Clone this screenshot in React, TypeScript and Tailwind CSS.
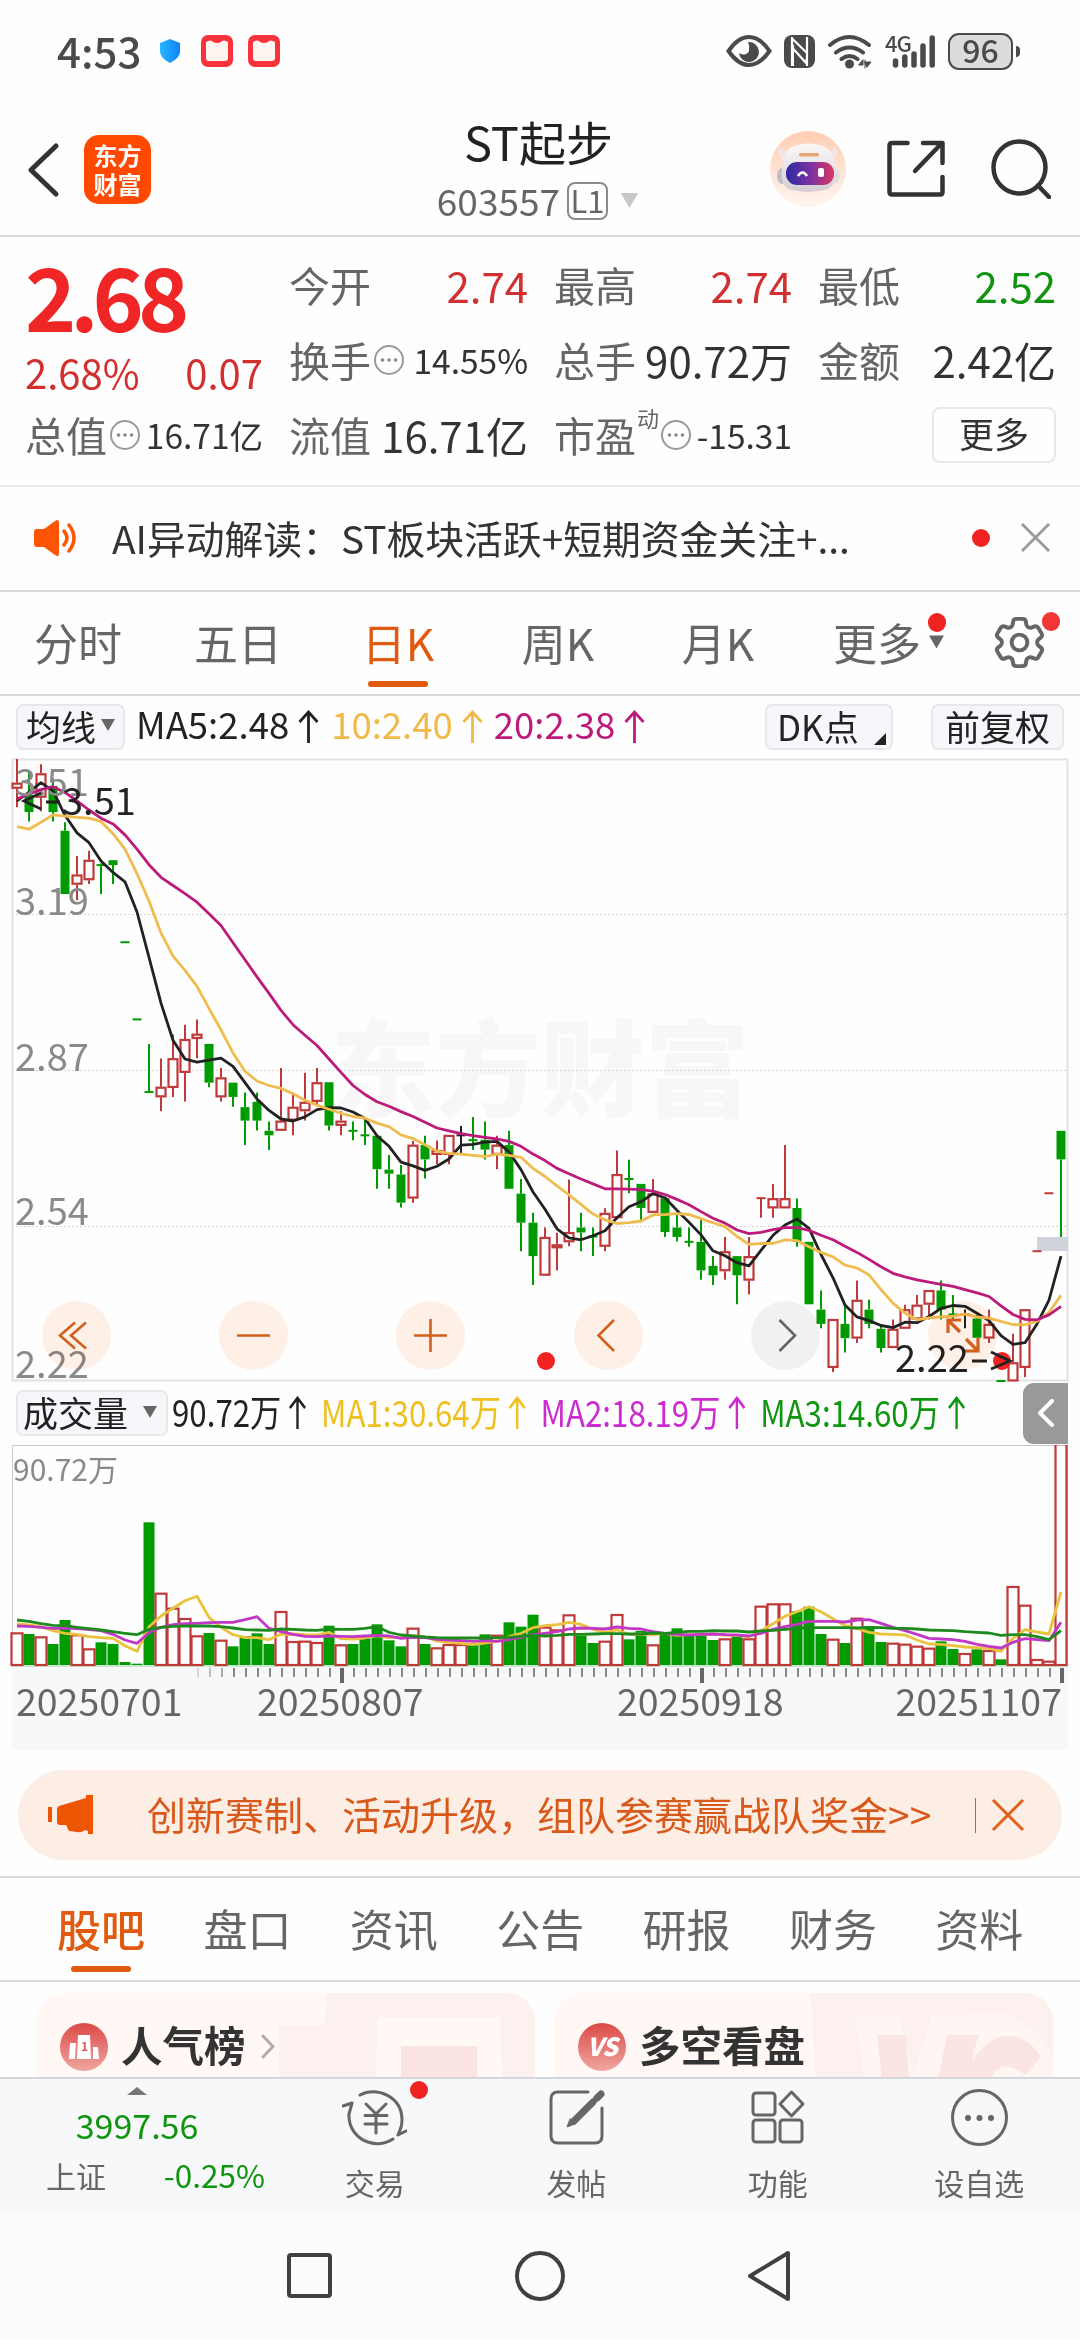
import React, { useState } from "react";
import { HiOutlineCog6Tooth } from "react-icons/hi2";

type Kind = "r" | "g" | "k";
// [color, high, body top, body bottom, low] in chart units (0.01 = 11.8)
type Candle = [Kind, number, number, number, number];

const candles: Candle[] = [
  ["r", 22, 80, 95, 140], ["g", 55, 110, 152, 175], ["r", 35, 57, 117, 150], ["g", 70, 88, 152, 175],
  ["g", 177, 198, 353, 353], ["r", 260, 305, 330, 368], ["r", 247, 269, 319, 328], ["g", 278, 282, 282, 353],
  ["g", 270, 270, 282, 328], ["g", 471, 471, 471, 471], ["g", 660, 660, 660, 660], ["g", 720, 838, 838, 838],
  ["r", 756, 825, 851, 885], ["r", 697, 755, 828, 850], ["r", 673, 708, 791, 861], ["r", 660, 695, 708, 755],
  ["g", 720, 720, 815, 826], ["r", 779, 802, 851, 861], ["g", 815, 815, 850, 874], ["g", 839, 875, 908, 968],
  ["g", 839, 862, 908, 932], ["g", 910, 933, 944, 980], ["r", 779, 908, 933, 933], ["r", 839, 874, 908, 944],
  ["r", 791, 862, 885, 908], ["r", 779, 814, 862, 870], ["g", 814, 814, 920, 932], ["r", 885, 908, 921, 944],
  ["g", 910, 933, 933, 956], ["g", 900, 944, 944, 968], ["g", 945, 945, 1027, 1075], ["g", 992, 1028, 1038, 1075],
  ["g", 1017, 1040, 1109, 1121], ["r", 958, 967, 1099, 1109], ["g", 945, 968, 1003, 1050], ["r", 957, 980, 992, 1015],
  ["r", 943, 943, 992, 1015], ["k", 921, 944, 944, 990], ["g", 899, 956, 956, 980], ["g", 910, 955, 979, 1003],
  ["r", 945, 967, 992, 1027], ["g", 933, 968, 1075, 1075], ["g", 1051, 1087, 1158, 1228], ["g", 1134, 1158, 1240, 1311],
  ["r", 1170, 1193, 1288, 1288], ["r", 1183, 1211, 1217, 1275], ["r", 1052, 1181, 1206, 1216], ["g", 1134, 1170, 1182, 1228],
  ["g", 1170, 1192, 1192, 1240], ["r", 1123, 1134, 1217, 1228], ["r", 981, 1039, 1147, 1147], ["g", 1004, 1051, 1051, 1086],
  ["g", 1063, 1063, 1122, 1157], ["r", 1051, 1086, 1134, 1134], ["g", 1098, 1098, 1181, 1193], ["g", 1134, 1170, 1193, 1204],
  ["g", 1170, 1205, 1205, 1217], ["g", 1147, 1205, 1275, 1298], ["g", 1240, 1264, 1287, 1311], ["r", 1193, 1228, 1277, 1298],
  ["g", 1240, 1240, 1287, 1358], ["r", 1193, 1240, 1300, 1334], ["r", 1098, 1098, 1098, 1146], ["r", 1063, 1098, 1123, 1146],
  ["r", 968, 1098, 1123, 1123], ["g", 1099, 1122, 1205, 1217], ["g", 1205, 1205, 1358, 1358], ["g", 1324, 1371, 1406, 1417],
  ["r", 1394, 1394, 1514, 1524], ["g", 1360, 1406, 1441, 1476], ["r", 1300, 1347, 1442, 1453], ["g", 1347, 1371, 1406, 1417],
  ["g", 1410, 1418, 1465, 1476], ["r", 1395, 1418, 1465, 1465], ["r", 1359, 1370, 1418, 1418], ["r", 1335, 1359, 1395, 1395],
  ["r", 1323, 1323, 1359, 1395], ["g", 1300, 1324, 1371, 1395], ["g", 1335, 1383, 1383, 1393], ["k", 1371, 1383, 1383, 1417],
  ["g", 1383, 1393, 1440, 1440], ["r", 1371, 1406, 1442, 1453], ["g", 1546, 1546, 1546, 1546], ["r", 1430, 1500, 1547, 1547],
  ["r", 1370, 1370, 1514, 1536], ["r", 1228, 1228, 1228, 1228], ["r", 1086, 1086, 1086, 1086], ["g", 933, 933, 1003, 1193],
];

const ma5 = [125, 103, 80, 100, 160, 203, 227, 272, 300, 323, 397, 508, 620, 711, 757, 765, 760, 755, 775, 815, 855, 883, 904, 909, 899, 881, 876, 877, 887, 903, 945, 971, 1010, 1019, 1030, 1020, 1002, 968, 966, 961, 959, 985, 1028, 1083, 1125, 1173, 1195, 1200, 1190, 1178, 1146, 1119, 1107, 1087, 1097, 1128, 1157, 1188, 1227, 1239, 1256, 1264, 1226, 1189, 1164, 1149, 1172, 1236, 1293, 1360, 1389, 1398, 1410, 1415, 1402, 1403, 1388, 1368, 1361, 1363, 1380, 1398, 1435, 1456, 1452, 1406, 1348, 1240];
const ma10 = [188, 194, 177, 159, 162, 165, 167, 175, 205, 243, 303, 370, 448, 505, 540, 579, 633, 686, 742, 787, 811, 822, 829, 842, 858, 870, 880, 890, 898, 902, 914, 923, 943, 952, 967, 983, 988, 990, 993, 996, 990, 993, 998, 1025, 1045, 1068, 1090, 1113, 1137, 1151, 1160, 1158, 1154, 1139, 1138, 1136, 1138, 1148, 1158, 1168, 1192, 1211, 1209, 1209, 1200, 1202, 1217, 1231, 1242, 1262, 1269, 1286, 1322, 1355, 1380, 1396, 1391, 1389, 1387, 1382, 1389, 1392, 1400, 1408, 1408, 1400, 1378, 1336];
const ma20 = [120, 108, 97, 90, 104, 125, 147, 167, 181, 208, 243, 281, 312, 332, 352, 373, 401, 430, 472, 514, 556, 596, 638, 673, 699, 724, 757, 790, 822, 844, 862, 873, 886, 898, 912, 926, 933, 940, 945, 949, 953, 959, 971, 990, 1006, 1025, 1038, 1051, 1063, 1075, 1075, 1076, 1077, 1081, 1089, 1101, 1114, 1131, 1147, 1159, 1176, 1185, 1182, 1175, 1170, 1170, 1177, 1189, 1200, 1216, 1231, 1248, 1266, 1282, 1291, 1298, 1304, 1309, 1314, 1322, 1330, 1339, 1362, 1383, 1395, 1396, 1384, 1363];

const volumes = [757, 762, 769, 792, 720, 763, 805, 787, 792, 846, 851, 427, 638, 683, 714, 766, 759, 779, 799, 768, 760, 792, 693, 783, 782, 786, 737, 793, 792, 775, 733, 781, 799, 743, 792, 802, 792, 792, 790, 763, 764, 727, 740, 704, 740, 748, 703, 767, 789, 782, 702, 778, 753, 793, 760, 745, 762, 762, 780, 775, 770, 775, 677, 670, 670, 694, 680, 762, 776, 789, 713, 738, 786, 788, 791, 797, 803, 784, 807, 819, 808, 810, 838, 618, 674, 837, 842, 190];
const volMa1 = [732, 735, 740, 752, 760, 763, 770, 773, 775, 797, 814, 740, 708, 685, 662, 649, 712, 742, 764, 773, 773, 779, 763, 762, 764, 765, 757, 776, 777, 774, 767, 773, 773, 768, 771, 783, 787, 790, 794, 789, 783, 770, 760, 743, 737, 734, 727, 733, 748, 757, 750, 763, 762, 764, 760, 766, 764, 763, 762, 765, 767, 770, 752, 731, 709, 695, 680, 695, 716, 737, 745, 757, 762, 763, 765, 780, 792, 793, 797, 801, 803, 805, 814, 775, 749, 756, 762, 636];
const volMa2 = [738, 739, 742, 745, 744, 746, 749, 752, 763, 780, 790, 758, 742, 734, 731, 730, 728, 727, 727, 719, 710, 745, 755, 763, 769, 770, 768, 769, 770, 768, 766, 768, 775, 772, 773, 778, 780, 782, 784, 782, 784, 779, 772, 764, 760, 755, 747, 744, 745, 747, 741, 745, 747, 755, 760, 763, 765, 763, 762, 764, 765, 768, 760, 748, 740, 733, 724, 724, 724, 726, 720, 719, 730, 742, 752, 763, 775, 777, 779, 784, 793, 799, 804, 787, 776, 779, 782, 727];
const volMa3 = [720, 724, 731, 736, 737, 742, 746, 750, 755, 760, 764, 748, 742, 739, 738, 738, 738, 740, 744, 749, 750, 751, 747, 748, 750, 751, 747, 748, 748, 745, 740, 757, 765, 768, 771, 773, 774, 774, 774, 774, 773, 772, 769, 766, 768, 766, 763, 763, 762, 761, 761, 762, 762, 759, 760, 757, 754, 754, 752, 753, 753, 756, 753, 751, 748, 745, 743, 743, 743, 743, 744, 742, 743, 745, 745, 747, 750, 751, 752, 755, 757, 759, 766, 764, 764, 770, 779, 752];

const RED = "#be3a3a";
const GREEN = "#009b00";
const colors: Record<Kind, string> = { r: RED, g: GREEN, k: "#222" };

const cx = (i: number) => 17 + i * 12;
const priceY = (v: number) => v / 2.45 - 9;
const volY = (v: number) => v / 3 - 65;
const line = (data: number[], y: (v: number) => number) =>
  data.map((v, i) => `${cx(i)},${y(v).toFixed(1)}`).join(" ");

const UpArrow = ({ className = "" }: { className?: string }) => (
  <svg className={className} width="21" height="34" viewBox="0 0 21 34" fill="none" stroke="currentColor" strokeWidth="2.8">
    <path d="M10.5 33V3M1.5 12l9-10 9 10" />
  </svg>
);

const Down = ({ className = "" }: { className?: string }) => (
  <svg className={className} width="14" height="12" viewBox="0 0 14 12" fill="currentColor">
    <path d="M0 0h14L7 12z" />
  </svg>
);

const MoreDots = () => (
  <svg className="ml-[2px] shrink-0" width="32" height="32" viewBox="0 0 32 32">
    <circle cx="16" cy="16" r="14" fill="none" stroke="#9a9a9a" strokeWidth="2" />
    <g fill="#888">
      <circle cx="9.5" cy="16" r="1.8" />
      <circle cx="16" cy="16" r="1.8" />
      <circle cx="22.5" cy="16" r="1.8" />
    </g>
  </svg>
);

function StatusBar() {
  return (
    <div className="flex h-[102px] items-center pl-[57px] pr-[60px] text-[#4a4a4a]">
      <span className="-mt-[2px] text-[42px] font-medium leading-none">4:53</span>
      <svg className="ml-[18px]" width="22" height="24" viewBox="0 0 22 24">
        <defs>
          <linearGradient id="shield" x2="1">
            <stop offset="0" stopColor="#27b7ff" />
            <stop offset="1" stopColor="#0f83f7" />
          </linearGradient>
        </defs>
        <path d="M11 0l10 4v8c0 5-4 9-10 12C5 21 1 17 1 12V4z" fill="url(#shield)" />
      </svg>
      {[0, 1].map((n) => (
        <svg key={n} className={n ? "ml-[15px]" : "ml-[20px]"} width="32" height="32" viewBox="0 0 32 32">
          <rect width="32" height="32" rx="7" fill="#f8333c" />
          <path d="M5 7q5-3 7 0 4 2 8 0 2-3 7 0v16q0 3-3 3H8q-3 0-3-3z" fill="#fff5f0" />
        </svg>
      ))}
      <div className="flex-1" />
      <svg width="46" height="34" viewBox="0 0 46 34">
        <path d="M2.5 17C10 6 17 3 23 3s13 3 20.500 14C36 28 29 31 23 31S10 28 2.500 17z" fill="none" stroke="currentColor" strokeWidth="4" />
        <path d="M22 8a10 10 0 11-9 11q7 4 10-2 1-5-1-9z" fill="currentColor" />
      </svg>
      <svg className="ml-[12px]" width="31" height="33" viewBox="0 0 31 33">
        <rect width="31" height="33" rx="8" fill="currentColor" />
        <path d="M9 31V7l14 19V2" stroke="#fff" strokeWidth="2" fill="none" />
        <path d="M9.500 3l13.500 14v9L9 7zM9 2h3l11 14-2 10L9 9z" fill="#4a4a4a" />
        <path d="M8 2v29M23 2v29M8.500 4L23 18M8.500 13L23 29" stroke="#fff" strokeWidth="2.200" fill="none" />
      </svg>
      <svg className="ml-[12px]" width="46" height="35" viewBox="0 0 46 35" fill="none" stroke="currentColor" strokeWidth="4" strokeLinecap="round">
        <path d="M3 11q19-16 39 0M9 18.500q13.500-10 27 0M14.500 25q8-6 16 0" />
        <circle cx="22.500" cy="30" r="4.500" fill="currentColor" stroke="none" />
        <path d="M32 31h4v-5zM38 26v8M38 28h6l-4 5z" strokeWidth="1" fill="currentColor" />
      </svg>
      <div className="relative ml-[12px] h-[36px] w-[50px]">
        <span className="absolute -top-[2px] left-0 text-[22px] font-medium leading-none tracking-[-1px]">4G</span>
        <svg width="50" height="36" viewBox="0 0 50 36" stroke="currentColor" strokeWidth="5.500" strokeLinecap="round">
          <path d="M10.500 28v4M19.800 24v8M29 21v11M38 13v19M47.200 5v27" />
        </svg>
      </div>
      <div className="ml-[13px] flex h-[37px] w-[65px] items-center justify-center rounded-[11px] border-[2.5px] border-[#4a4a4a] bg-[#dcdcdc]">
        <span className="relative -top-[2px] text-[32px] font-medium leading-none">96</span>
      </div>
      <div className="ml-[3px] h-[11px] w-[4px] rounded-r bg-[#4a4a4a]" />
    </div>
  );
}

function Robot() {
  return (
    <svg width="76" height="76" viewBox="0 0 76 76">
      <defs>
        <linearGradient id="halo" x2="0" y2="1">
          <stop offset="0" stopColor="#ffcdb2" />
          <stop offset="1" stopColor="#fff6f1" />
        </linearGradient>
        <linearGradient id="visor" x2="1">
          <stop offset="0" stopColor="#2c2a9e" />
          <stop offset=".5" stopColor="#7b30a6" />
          <stop offset="1" stopColor="#d9385f" />
        </linearGradient>
        <linearGradient id="helmet" x2="0" y2="1">
          <stop offset="0" stopColor="#fdf9f8" />
          <stop offset="1" stopColor="#d3ccd3" />
        </linearGradient>
      </defs>
      <circle cx="38" cy="38" r="38" fill="url(#halo)" />
      <path d="M9 14q-3 9 4 15l8-8Q12 21 9 14zM66 14q4 9-3 15l-7-8q8 0 10-7z" fill="#f3e6e2" />
      <ellipse cx="12" cy="45" rx="5" ry="8" fill="#bfbcc6" />
      <ellipse cx="66" cy="45" rx="4" ry="7" fill="#e3dce0" />
      <path d="M20 17q18-9 37 0 8 6 9 21 1 14-8 20-20 6-40 0-8-6-6-20 1-15 8-21z" fill="url(#helmet)" />
      <rect x="29" y="22" width="20" height="3.500" rx="1.700" fill="#e5a873" />
      <rect x="16" y="31" width="48" height="23" rx="11" fill="url(#visor)" />
      <path d="M28 45q4.500-7 9 0" fill="none" stroke="#fff" strokeWidth="2.500" />
      <rect x="48" y="37" width="6" height="9" rx="2" fill="#fff" />
    </svg>
  );
}

function Header() {
  return (
    <div className="flex h-[135px] items-start border-b-2 border-[#dcdcdc] pl-[27px] pr-[29px]">
      <svg className="mt-[41px]" width="32" height="54" viewBox="0 0 32 54" fill="none" stroke="#333" strokeWidth="5" strokeLinecap="round" strokeLinejoin="round">
        <path d="M29 3L4 27l25 24" />
      </svg>
      <div className="ml-[25px] mt-[33px] flex h-[69px] w-[67px] flex-col items-center justify-center rounded-[15px] bg-[#ff4800] pb-[2px] text-[24px] font-bold leading-[29px] text-white">
        <span>东方</span>
        <span>财富</span>
      </div>
      <div className="flex w-[776px] flex-col items-center">
        <div className="mt-[14px] text-[47px] leading-[50px] text-[#222]">ST起步</div>
        <div className="mt-[12px] flex items-center text-[#666]">
          <span className="text-[37px] leading-[44px]">603557</span>
          <span className="ml-[7px] mt-[2px] flex h-[38px] w-[41px] items-center justify-center rounded-[8px] border-2 border-[#8a8a8a] pb-[3px] text-[31px] leading-none">L1</span>
          <Down className="ml-[11px] h-[15px] w-[21px] text-[#c8c8c8]" />
        </div>
      </div>
      <div className="-ml-[156px] mt-[29px] flex items-center">
        <Robot />
        <svg className="ml-[41px]" width="58" height="58" viewBox="0 0 58 58" fill="none" stroke="#333" strokeWidth="4.500" strokeLinecap="round" strokeLinejoin="round">
          <path d="M20.500 3H5Q2.500 3 2.500 5.500V52q0 2.500 2.500 2.500h48.500q2 0 2-2.500V37M36 3h19.500v20M54 4L28 31" />
        </svg>
        <svg className="ml-[46px]" width="60" height="60" viewBox="0 0 60 60" fill="none" stroke="#333" strokeWidth="4.500" strokeLinecap="round">
          <circle cx="28.500" cy="28.500" r="26" />
          <path d="M47 46.500L58 58" />
        </svg>
      </div>
    </div>
  );
}

function Cell({ label, value, color = "text-[#333]", small, dots, sup }: {
  label: string;
  value: string;
  color?: string;
  small?: boolean;
  dots?: boolean;
  sup?: string;
}) {
  return (
    <div className="flex h-[75px] items-center whitespace-nowrap">
      <span className="text-[41px] text-[#666]">{label}</span>
      {sup && <span className="-mr-[1px] ml-[1px] -mt-[36px] text-[22px] text-[#666]">{sup}</span>}
      {dots && <MoreDots />}
      <span className={`ml-auto ${color} ${small ? "text-[33.5px]" : "text-[42px]"}`}>{value}</span>
    </div>
  );
}

function Quote() {
  return (
    <div className="flex h-[250px] gap-[26px] border-b-2 border-[#ececec] pl-[25px] pr-[24px] pt-[10px] leading-none">
      <div className="flex w-[238px] flex-col text-[#d23030]">
        <div className="h-[100px] whitespace-nowrap pt-[4px] text-[87px] font-bold leading-[86px] tracking-[-6px] text-[#f02626]">2.68</div>
        <div className="flex h-[50px] items-center justify-between text-[40px]">
          <span>2.68%</span>
          <span>0.07</span>
        </div>
        <Cell label="总值" value="16.71亿" small dots />
      </div>
      <div className="w-[239px]">
        <Cell label="今开" value="2.74" color="text-[#d23030]" />
        <Cell label="换手" value="14.55%" small dots />
        <Cell label="流值" value="16.71亿" />
      </div>
      <div className="w-[238px]">
        <Cell label="最高" value="2.74" color="text-[#d23030]" />
        <Cell label="总手" value="90.72万" />
        <Cell label="市盈" value="-15.31" small dots sup="动" />
      </div>
      <div className="w-[238px]">
        <Cell label="最低" value="2.52" color="text-[#109510]" />
        <Cell label="金额" value="2.42亿" />
        <div className="flex h-[75px] items-center justify-end">
          <button className="flex h-[56px] w-[124px] items-center justify-center rounded-[8px] border-2 border-[#e8e8e8] pb-[4px] text-[35px] text-[#333]">更多</button>
        </div>
      </div>
    </div>
  );
}

function Notice() {
  return (
    <div className="flex h-[105px] items-center border-b-2 border-[#d9d9d9] pb-[2px] pl-[33px] pr-[29px]">
      <svg width="46" height="38" viewBox="0 0 46 38">
        <path d="M1 13q0-3 3-3h7L22 2q4-3 4 2v30q0 5-4 2l-11-8H4q-3 0-3-3z" fill="#ff5500" />
        <path d="M31 12q6 7 0 14M36 6q10 13 0 26" fill="none" stroke="#ff5500" strokeWidth="3.500" strokeLinecap="round" />
      </svg>
      <span className="ml-[33px] text-[38.8px] leading-none text-[#333]">AI异动解读：ST板块活跃+短期资金关注+...</span>
      <span className="ml-auto h-[18px] w-[18px] rounded-full bg-[#f02222]" />
      <svg className="ml-[30px]" width="31" height="31" viewBox="0 0 31 31" stroke="#999" strokeWidth="2.800">
        <path d="M2 2l27 27M29 2L2 29" />
      </svg>
    </div>
  );
}

function PeriodTabs() {
  const [active, setActive] = useState("日K");
  const tabs = ["分时", "五日", "日K", "周K", "月K"];
  return (
    <div className="flex h-[104px] items-center border-b-2 border-[#d9d9d9] pb-[2px] text-[44px] leading-none text-[#666]">
      <div className="-ml-0.5 flex">
        {tabs.map((t) => (
          <button
            key={t}
            onClick={() => setActive(t)}
            className={`relative w-40 text-center leading-none ${t === active ? "text-[#e05a10]" : ""}`}
          >
            {t}
            {t === active && <span className="absolute -bottom-[23px] left-[50px] h-[6px] w-[60px] rounded-full bg-[#e05a10]" />}
          </button>
        ))}
      </div>
      <button className="relative ml-[35px] flex items-center leading-none">
        更多
        <Down className="ml-[8px] h-[14px] w-[15px]" />
        <span className="absolute -top-[7px] left-[95px] h-[19px] w-[18px] rounded-full bg-[#f02222]" />
      </button>
      <button className="relative ml-[44px]">
        <HiOutlineCog6Tooth className="h-[63px] w-[63px] [&_path]:[stroke-width:1.5]" />
        <span className="absolute top-[1px] left-[54px] h-[19px] w-[18px] rounded-full bg-[#f23535]" />
      </button>
    </div>
  );
}

const chip = "flex h-[46px] items-center rounded-[7px] border-2 border-[#e6e8eb] bg-[#f6f7fa] pb-[3px] text-[35px] leading-none text-[#222]";

function MaRow() {
  return (
    <div className="flex h-[63px] items-center pb-[2px] pl-[16px] pr-[16px] text-[36.5px] leading-none">
      <button className={`${chip} w-[109px] pl-[8px]`}>
        均线
        <Down className="ml-[5px] text-[#666]" />
      </button>
      <span className="-mt-[4px] ml-[11px] text-[#222]">MA5:2.48</span>
      <UpArrow className="ml-[9px] text-[#222]" />
      <span className="-mt-[4px] ml-[12px] text-[#f1b947]">10:2.40</span>
      <UpArrow className="ml-[9px] text-[#f1b947]" />
      <span className="-mt-[4px] ml-[11px] text-[#bd1b7b]">20:2.38</span>
      <UpArrow className="ml-[9px] text-[#bd1b7b]" />
      <button className={`${chip} relative ml-auto w-[128px] pl-[10px]`}>
        DK点
        <svg className="absolute bottom-[3px] right-[5px]" width="12" height="12">
          <path d="M12 0v12H0z" fill="#222" />
        </svg>
      </button>
      <button className={`${chip} ml-[38px] w-[133px] justify-center`}>前复权</button>
    </div>
  );
}

function PriceChart() {
  return (
    <svg className="block overflow-visible" width="1080" height="622" viewBox="0 0 1080 622">
      <text x="540" y="349" fontSize="105" fontWeight="900" fill="#f7f7f7" textAnchor="middle">东方财富</text>
      <path d="M12.500 622V0.500H1067.500V622" fill="none" stroke="#e2e2e2" strokeWidth="2" />
      <path d="M12 621.500H1068" stroke="#e2e2e2" strokeWidth="2" />
      <path d="M12 155.500H1068M12 311.500H1068M12 467.500H1068" stroke="#d6d6d6" strokeDasharray="2 2" />
      <rect x="1037" y="478" width="31" height="14" fill="#d0d4da" />

      {candles.map(([kind, high, top, bottom, low], i) => {
        const x = cx(i);
        const c = colors[kind];
        const doji = top === bottom;
        return (
          <g key={i}>
            {high < top && <path d={`M${x} ${priceY(high)}V${priceY(top)}`} stroke={c} strokeWidth="2" />}
            {low > bottom && <path d={`M${x} ${priceY(bottom)}V${priceY(low)}`} stroke={c} strokeWidth="2" />}
            {doji && <path d={`M${x - 4.5} ${priceY(top)}h9`} stroke={c} strokeWidth="2" />}
            {!doji && kind === "r" && (
              <rect x={x - 4.5} y={priceY(top) + 1} width="9" height={Math.max(priceY(bottom) - priceY(top) - 2, 2)} fill="#fff" stroke={c} strokeWidth="2.200" />
            )}
            {!doji && kind === "g" && (
              <rect x={x - 4.5} y={priceY(top)} width="9" height={priceY(bottom) - priceY(top)} fill={c} />
            )}
          </g>
        );
      })}

      <g fill="none" strokeWidth="2.800" strokeLinejoin="round">
        <polyline points={line(ma5, priceY)} stroke="#222" />
        <polyline points={line(ma10, priceY)} stroke="#f0bc50" />
        <polyline points={line(ma20, priceY)} stroke="#bd1b7b" />
      </g>

      <g fontSize="38" fill="#8a8a8a">
        <text x="15" y="37">3.51</text>
        <text x="15" y="156">3.19</text>
        <text x="15" y="312">2.87</text>
        <text x="15" y="466">2.54</text>
        <text x="15" y="619">2.22</text>
      </g>
      <circle cx="546" cy="602" r="9" fill="#f02222" />
      <circle cx="1002" cy="602" r="9" fill="#f02222" />
      <g fontSize="38" fill="#222">
        <text x="62" y="56">3.51</text>
        <text x="895" y="613">2.22</text>
      </g>
      <g fill="none" stroke="#222" strokeWidth="2.800">
        <path d="M41 34L24 42l17 8M46 43h14" />
        <path d="M972 602h15M991 593l19 9-19 8" />
      </g>
    </svg>
  );
}

const controls = [
  <path d="M33 18L18 31l15 13M44 18L29 31l15 13" />,
  <path d="M18 34.500h33" />,
  <path d="M18 34.500h33M34.500 18v33" />,
  <path d="M40 19L24.500 34.500 40 50" />,
  <path d="M28.500 19L44 34.500 28.500 50" />,
  <path d="M20 32V19h13M20 19l12 12M50 37v13H37M50 50L38 38" />,
];

function ChartControls() {
  return (
    <div className="absolute bottom-[11px] left-[42px] flex gap-[108.2px] mix-blend-multiply">
      {controls.map((icon, i) => (
        <button
          key={i}
          className={`h-[69px] w-[69px] rounded-full ${i === 4 ? "bg-[#f2f2f2]" : "bg-[#fff0e8]"}`}
        >
          <svg width="69" height="69" viewBox={i === 0 ? "0 -3.5 69 69" : "0 0 69 69"} fill="none" stroke={i === 4 ? "#666" : "#d2601c"} strokeWidth={i === 5 ? 3.2 : 2.6}>
            {icon}
          </svg>
        </button>
      ))}
    </div>
  );
}

function VolumeRow() {
  const items = [
    { text: "90.72万", color: "text-[#222]" },
    { text: "MA1:30.64万", color: "text-[#efc01f]" },
    { text: "MA2:18.19万", color: "text-[#cb2bd0]" },
    { text: "MA3:14.60万", color: "text-[#109510]" },
  ];
  return (
    <div className="flex h-[64px] items-center pl-[16px] leading-none">
      <button className={`${chip} w-[152px] shrink-0 pl-[5px]`}>
        成交量
        <Down className="ml-[15px] text-[#666]" />
      </button>
      {/* the legend is condensed so that four values fit on one line */}
      <div className="ml-[4px] flex w-[851px] shrink-0">
        <div className="flex origin-left scale-x-[0.845] items-center whitespace-nowrap text-[37px]">
          {items.map((it) => (
            <span key={it.text} className={`mr-[17px] flex items-center ${it.color}`}>
              <span className="-mt-[4px]">{it.text}</span>
              <UpArrow className="ml-[9px]" />
            </span>
          ))}
        </div>
      </div>
      <button className="flex h-[61px] w-[45px] items-center justify-center rounded-l-[11px] bg-[#999]">
        <svg width="18" height="28" viewBox="0 0 18 28" fill="none" stroke="#fff" strokeWidth="4" strokeLinecap="round" strokeLinejoin="round">
          <path d="M15 2L3 14l12 12" />
        </svg>
      </button>
    </div>
  );
}

function VolumeChart() {
  const base = 220;
  const ticks = Array.from({ length: 73 }, (_, i) => 198 + i * 12);
  const major = [342, 702, 1062];
  return (
    <svg className="block" width="1080" height="305" viewBox="0 0 1080 305">
      <rect x="12" y="221" width="1056" height="86" fill="#f7f8fa" />
      <path d="M12.500 221V0.500H1067.500V221" fill="none" stroke="#c8c8c8" />
      <path d="M12 221H1068" stroke="#9fcf9f" />
      {volumes.map((v, i) => {
        const x = cx(i);
        const y = volY(v);
        const up = candles[i][0] !== "g" || i === volumes.length - 1;
        if (!up) return <rect key={i} x={x - 5.5} y={y} width="11" height={base - y} fill={GREEN} />;
        return <rect key={i} x={x - 5.5} y={y + 1} width="11" height={base - y - 1} fill="#fff" stroke={RED} strokeWidth="2.200" />;
      })}
      <g fill="none" strokeWidth="2.800" strokeLinejoin="round">
        <polyline points={line(volMa1, volY)} stroke="#eac33c" />
        <polyline points={line(volMa2, volY)} stroke="#c238c6" />
        <polyline points={line(volMa3, volY)} stroke="#1d8a1d" />
      </g>
      <text x="13" y="36" fontSize="30" fill="#8a8a8a">90.72万</text>
      {ticks.map((x, i) =>
        major.includes(x) ? (
          <path key={x} d={`M${x} 223v15`} stroke="#666" strokeWidth="4" />
        ) : (
          <path key={x} d={`M${x} 223v9`} stroke="#888" strokeWidth="2" opacity={i < 3 ? 0.3 + i * 0.2 : 1} />
        )
      )}
      <g fontSize="37.500" fill="#666">
        <text x="16" y="271">20250701</text>
        <text x="257" y="271">20250807</text>
        <text x="617" y="271">20250918</text>
        <text x="1062" y="271" textAnchor="end">20251107</text>
      </g>
    </svg>
  );
}

function Banner() {
  return (
    <div className="mx-[18px] mt-[20px] flex h-[90px] items-center rounded-full bg-[#fdeee5] pl-[30px] pr-[37px]">
      <svg width="46" height="40" viewBox="0 0 46 40" fill="#ee5500">
        <path d="M0 12h4v15H0zM9 14q0-2 2-3l27-8V0h7v39h-5v-3l-3-1q-4 3-8 2l-8-1-3-6H12q-3 0-3-3z" />
      </svg>
      <span className="-mt-[4px] ml-[53px] whitespace-nowrap text-[39px] leading-none text-[#d9591a]">创新赛制、活动升级，组队参赛赢战队奖金&gt;&gt;</span>
      <span className="ml-auto h-[35px] w-[1.5px] bg-[#d9591a]" />
      <svg className="ml-[15px]" width="34" height="34" viewBox="0 0 34 34" stroke="#e0601c" strokeWidth="3">
        <path d="M2 2l30 30M32 2L2 32" />
      </svg>
    </div>
  );
}

function InfoTabs() {
  const [active, setActive] = useState("股吧");
  const tabs = ["股吧", "盘口", "资讯", "公告", "研报", "财务", "资料"];
  return (
    <div className="mt-[16px] flex h-[106px] items-center gap-[58.4px] border-y-2 border-[#d9d9d9] pb-[2px] pl-[57px] text-[44px] leading-none text-[#666]">
      {tabs.map((t) => (
        <button
          key={t}
          onClick={() => setActive(t)}
          className={`relative w-[88px] leading-none ${t === active ? "font-medium text-[#e05a10]" : ""}`}
        >
          {t}
          {t === active && <span className="absolute -bottom-[22px] left-[14px] h-[6px] w-[60px] rounded-full bg-[#e05a10]" />}
        </button>
      ))}
    </div>
  );
}

const Badge = ({ children }: { children: React.ReactNode }) => (
  <svg className="shrink-0" width="48" height="48" viewBox="0 0 48 48">
    <defs>
      <linearGradient id="badge" x2="0" y2="1">
        <stop offset="0" stopColor="#dc4a46" />
        <stop offset="1" stopColor="#f0a6a0" />
      </linearGradient>
    </defs>
    <circle cx="24" cy="24" r="24" fill="url(#badge)" />
    {children}
  </svg>
);

function Cards() {
  return (
    <div className="flex h-[95px] gap-[19px] overflow-hidden pl-[36px] pt-[11px]">
      <div className="relative flex h-[150px] w-[499px] shrink-0 items-start overflow-hidden rounded-[28px] bg-[#fff8f5] pl-[24px] pt-[30px]">
        <svg className="absolute inset-0" width="499" height="150">
          <path d="M290 0h209v150H243V32h46z" fill="#fdf1ef" />
          <path d="M342 24h122l4 126H337z" fill="#fff8f5" />
          <path d="M365 53h76v97h-76z" fill="#fae5e3" />
        </svg>
        <Badge>
          <path d="M10 20h6l-1 16H9zM18 12h12l1 24H17zM33 24h5l1 12h-6z" fill="#fff" />
          <text x="21" y="28" fontSize="12" fontWeight="700" fill="#dc5a54">1</text>
        </Badge>
        <span className="relative ml-[13px] text-[41.5px] font-bold leading-[42px] text-[#333]">人气榜</span>
        <svg className="relative ml-[15px] mt-[11px]" width="14" height="25" viewBox="0 0 14 25" fill="none" stroke="#b3abaa" strokeWidth="3" strokeLinecap="round">
          <path d="M2 2l10 10.500L2 23" />
        </svg>
      </div>
      <div className="relative flex h-[150px] w-[499px] shrink-0 items-start overflow-hidden rounded-[28px] bg-[#fff8f5] pl-[24px] pt-[30px]">
        <svg className="absolute inset-0" width="499" height="150">
          <path d="M256 0h243v150H266z" fill="#fdf1ef" />
          <path d="M301 22h44l15 60 18-60h34q22-4 42 0 45 18 45 60v68H320z" fill="#fff6f4" />
          <path d="M323 42h29l7 108h-24zM393 42h32q-9 20-17 108h-36zM445 44q26-6 42 20l-16 18q-20-16-31-2-6 12 8 25l20 45h-48q-28-80 25-106z" fill="#fae5e3" />
        </svg>
        <Badge>
          <text x="24" y="33" fontSize="25" fontWeight="800" fontStyle="italic" fill="#fff" textAnchor="middle" letterSpacing="-1">VS</text>
        </Badge>
        <span className="relative ml-[13px] text-[41.5px] font-bold leading-[42px] text-[#333]">多空看盘</span>
      </div>
    </div>
  );
}

const navItems = [
  {
    label: "交易",
    icon: (
      <>
        <path d="M18 8C34-1 60 9 60 33q0 6-2 10l-2 5 8-4M51 52C33 64 6 52 7 27l3-11-9 3" />
        <path d="M24 17l10 10 10-10M23 28.500h22M23 37h22M34 28v18" />
      </>
    ),
  },
  {
    label: "发帖",
    icon: (
      <>
        <path d="M44 5H14Q7 5 7 12v37q0 7 7 7h37q7 0 7-7V21" />
        <path d="M53 11l4-4M49 15L30 34" strokeWidth="7" />
        <path d="M26 32l-3 8 8-3z" fill="currentColor" strokeWidth="1" />
      </>
    ),
  },
  {
    label: "功能",
    icon: (
      <>
        <rect x="8" y="6" width="22" height="22" rx="3" />
        <rect x="8" y="33" width="22" height="22" rx="3" />
        <rect x="35" y="33" width="22" height="22" rx="3" />
        <path d="M46.500 5L58 17 46.500 29 35 17z" />
      </>
    ),
  },
  {
    label: "设自选",
    icon: (
      <>
        <circle cx="32.500" cy="30.500" r="27" />
        <g fill="currentColor" stroke="none">
          <circle cx="21" cy="31" r="3" />
          <circle cx="32.500" cy="31" r="3" />
          <circle cx="44" cy="31" r="3" />
        </g>
      </>
    ),
  },
];

function BottomNav() {
  return (
    <div className="flex h-[136px] border-t-2 border-[#d3d6da] bg-[#f7f8fa] leading-none">
      <div className="flex w-[274px] flex-col items-center">
        <svg className="mt-[8px]" width="20" height="8">
          <path d="M0 8L10 0l10 8z" fill="#777" />
        </svg>
        <span className="mt-[13px] text-[34px] text-[#109510]">3997.56</span>
        <div className="mt-[17px] flex w-full items-center justify-between pl-[46px] pr-[9px] text-[30px]">
          <span className="text-[#666]">上证</span>
          <span className="text-[31.500px] text-[#109510]">-0.25%</span>
        </div>
      </div>
      {navItems.map((item, i) => (
        <button key={item.label} className="relative flex w-[201.500px] flex-col items-center text-[#666]">
          <svg className="mt-[8px]" width="65" height="61" viewBox="0 0 65 61" fill="none" stroke="currentColor" strokeWidth="3" strokeLinecap="round" strokeLinejoin="round">
            {item.icon}
          </svg>
          <span className="mt-[19px] text-[30px] leading-none">{item.label}</span>
          {i === 0 && <span className="absolute left-[136px] top-[2px] h-[18px] w-[18px] rounded-full bg-[#f02222]" />}
        </button>
      ))}
    </div>
  );
}

function SystemNav() {
  return (
    <div className="flex h-[126px] items-center justify-center bg-[#fcfcfc]">
      <svg width="510" height="52" viewBox="0 0 510 52" fill="none" stroke="#404040" strokeWidth="4" strokeLinejoin="round">
        <rect x="4" y="5" width="41" height="41" rx="2" />
        <circle cx="255" cy="26" r="23" />
        <path d="M503 3v46L465 26z" />
      </svg>
    </div>
  );
}

export default function App() {
  return (
    <div className="h-[2340px] w-[1080px] overflow-hidden bg-[#fefefe] font-['Noto_Sans_CJK_SC',sans-serif]">
      <StatusBar />
      <Header />
      <Quote />
      <Notice />
      <PeriodTabs />
      <MaRow />
      <div className="relative">
        <PriceChart />
        <ChartControls />
      </div>
      <VolumeRow />
      <VolumeChart />
      <Banner />
      <InfoTabs />
      <Cards />
      <BottomNav />
      <SystemNav />
    </div>
  );
}
